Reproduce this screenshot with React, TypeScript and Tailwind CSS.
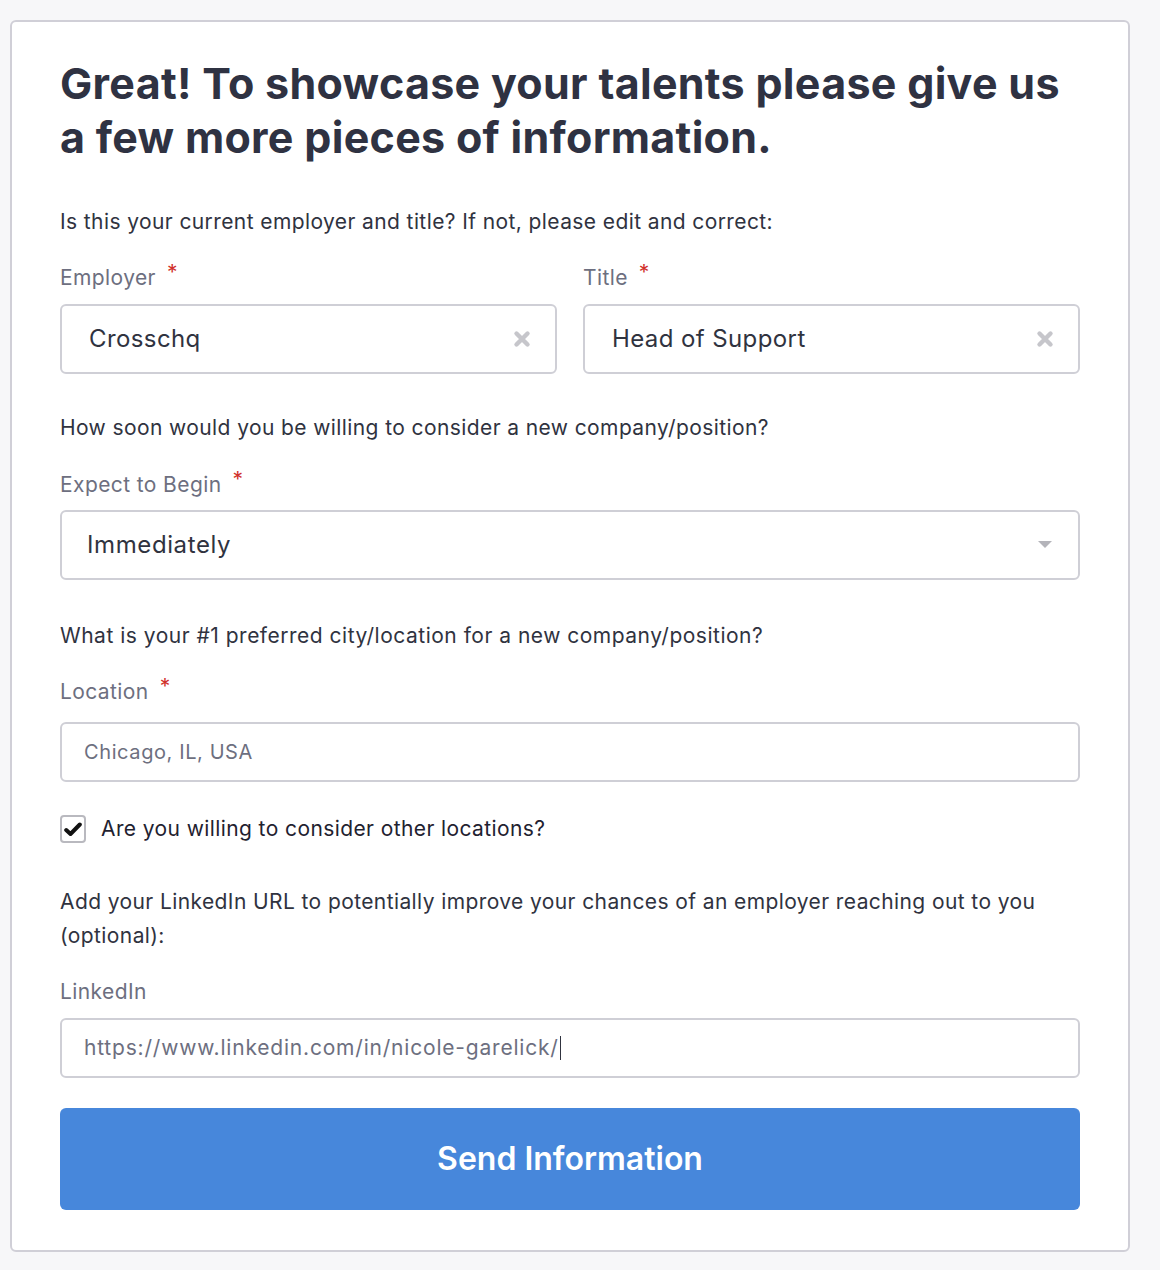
import React from "react";

const font = { fontFamily: "Inter, 'Noto Sans', sans-serif" };

function Label({ text, required = true }: { text: string; required?: boolean }) {
  return (
    <div className="flex items-start text-[21px] leading-[28px] tracking-[0.4px] text-[#6d6f80]">
      <span>{text}</span>
      {required && (
        <span className="ml-[11px] -mt-[5px] text-[21px] leading-[28px] text-[#d1302b]">*</span>
      )}
    </div>
  );
}

function ClearIcon() {
  return (
    <svg width="18" height="18" viewBox="0 0 18 18" className="shrink-0">
      <path d="M3.5 3.5 L14.5 14.5 M14.5 3.5 L3.5 14.5" stroke="#c6c6cb" strokeWidth="4.4" strokeLinecap="round" />
    </svg>
  );
}

function TextBox({ value }: { value: string }) {
  return (
    <div className="flex h-[70px] items-center justify-between rounded-[6px] border-2 border-[#cfcfd6] bg-white pl-[27px] pr-[24px]">
      <span className="text-[24px] tracking-[0.4px] text-[#30333f]">{value}</span>
      <ClearIcon />
    </div>
  );
}

export default function App() {
  return (
    <div className="min-h-[1270px] bg-[#f7f7f9] pt-[20px] pl-[10px]" style={font}>
      <div className="w-[1120px] rounded-[6px] border-2 border-[#d0cfd7] bg-white px-[48px] pt-[34px] pb-[40px]">
        <h1 className="text-[43px] font-bold leading-[54px] tracking-[0.3px] text-[#2f3242]">
          Great! To showcase your talents please give us
          <br />a few more pieces of information.
        </h1>

        <p className="mt-[44px] text-[21px] leading-[28px] tracking-[0.4px] text-[#30333f]">
          Is this your current employer and title? If not, please edit and correct:
        </p>

        <div className="mt-[28px] grid grid-cols-2 gap-x-[26px]">
          <div className="flex flex-col gap-[12px]">
            <Label text="Employer" />
            <TextBox value="Crosschq" />
          </div>
          <div className="flex flex-col gap-[12px]">
            <Label text="Title" />
            <TextBox value="Head of Support" />
          </div>
        </div>

        <p className="mt-[40px] text-[21px] leading-[28px] tracking-[0.4px] text-[#30333f]">
          How soon would you be willing to consider a new company/position?
        </p>
        <div className="mt-[29px] flex flex-col gap-[11px]">
          <Label text="Expect to Begin" />
          <div className="flex h-[70px] items-center justify-between rounded-[6px] border-2 border-[#cfcfd6] bg-white pl-[25px] pr-[26px]">
            <span className="text-[24px] tracking-[0.6px] text-[#30333f]">Immediately</span>
            <svg width="14" height="8" viewBox="0 0 14 8">
              <path d="M0 0 H14 L7 7 Z" fill="#b4b4ba" />
            </svg>
          </div>
        </div>

        <p className="mt-[42px] text-[21px] leading-[28px] tracking-[0.5px] text-[#30333f]">
          What is your #1 preferred city/location for a new company/position?
        </p>
        <div className="mt-[28px] flex flex-col gap-[16px]">
          <Label text="Location" />
          <div className="flex h-[60px] items-center rounded-[6px] border-2 border-[#cfcfd6] bg-white pl-[22px]">
            <span className="text-[20px] tracking-[0.6px] text-[#6d6f80]">Chicago, IL, USA</span>
          </div>
        </div>

        <label className="mt-[33px] flex items-center gap-[15px]">
          <span className="flex h-[28px] w-[26px] items-center justify-center rounded-[4px] border-2 border-[#b9b9bf] bg-white">
            <svg width="18" height="15" viewBox="0 0 18 15">
              <path d="M2.2 8 L6.5 12 L15.8 2.5" fill="none" stroke="#111" strokeWidth="4" strokeLinecap="round" strokeLinejoin="round" />
            </svg>
          </span>
          <span className="text-[21px] leading-[28px] tracking-[0.4px] text-[#1f2230]">Are you willing to consider other locations?</span>
        </label>

        <p className="mt-[42px] text-[21px] leading-[34px] tracking-[0.4px] text-[#30333f]">
          Add your LinkedIn URL to potentially improve your chances of an employer reaching out to you (optional):
        </p>
        <div className="mt-[25px] flex flex-col gap-[12px]">
          <Label text="LinkedIn" required={false} />
          <div className="flex h-[60px] items-center rounded-[6px] border-2 border-[#cfcfd6] bg-white pl-[22px]">
            <span className="text-[21px] tracking-[0.8px] text-[#6d6f80]">https://www.linkedin.com/in/nicole-garelick/</span>
            <span className="ml-[1px] h-[24px] w-[1px] bg-[#30333f]" />
          </div>
        </div>

        <button className="mt-[30px] flex h-[102px] w-full items-center justify-center rounded-[6px] bg-[#4787db] text-[32px] font-semibold text-white">
          Send Information
        </button>
      </div>
    </div>
  );
}
